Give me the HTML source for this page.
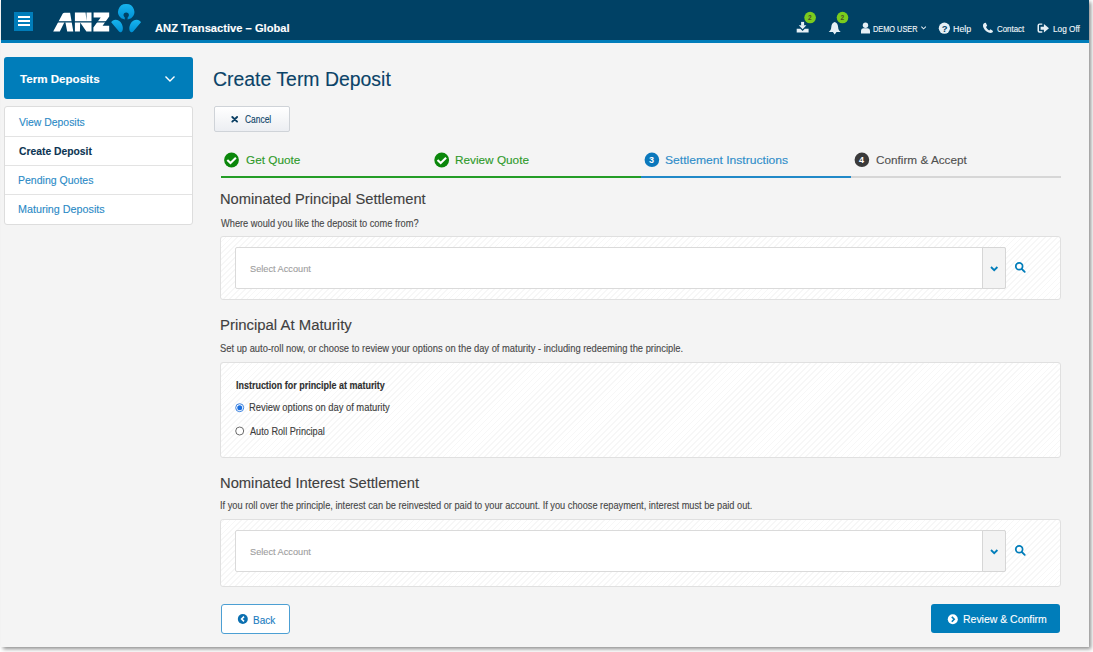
<!DOCTYPE html>
<html><head><meta charset="utf-8">
<style>
html,body{margin:0;padding:0;}
body{width:1093px;height:652px;background:#ffffff;position:relative;overflow:hidden;font-family:"Liberation Sans", sans-serif;}
.page{position:absolute;left:1px;top:0;width:1088px;height:647px;background:#f4f4f4;box-shadow:2px 2px 4px rgba(0,0,0,0.45);}
.hdr{position:absolute;left:1px;top:0;width:1088px;height:40px;background:#004165;}
.hdrline{position:absolute;left:1px;top:40px;width:1088px;height:3px;background:#007dba;}
.t{position:absolute;white-space:nowrap;line-height:1;font-family:"Liberation Sans", sans-serif;-webkit-text-stroke:0.12px currentColor;}
.abs{position:absolute;}
.panel{position:absolute;left:220px;width:839px;border:1px solid #e0e0e0;border-radius:3px;background:repeating-linear-gradient(-45deg, #ffffff 0px, #ffffff 3px, #f7f7f7 3px, #f7f7f7 4.2px);}
.inp{position:absolute;left:235px;width:769px;height:40px;border:1px solid #dadada;border-radius:2px;background:#fff;}
.addon{position:absolute;left:982px;width:22px;height:40px;border:1px solid #d6d6d6;border-radius:0 2px 2px 0;background:#f3f3f3;}
</style></head><body>
<div class="page"></div>
<div class="hdr"></div>
<div class="hdrline"></div>
<!-- hamburger -->
<div class="abs" style="left:14px;top:12px;width:19px;height:19px;background:#007dba;"></div>
<div class="abs" style="left:18px;top:16px;width:12px;height:2px;background:#fff;"></div>
<div class="abs" style="left:18px;top:20px;width:12px;height:2px;background:#fff;"></div>
<div class="abs" style="left:18px;top:24px;width:12px;height:2px;background:#fff;"></div>
<!-- logo -->
<svg class="abs" style="left:0;top:0" width="150" height="40" viewBox="0 0 150 40">
 <defs>
  <linearGradient id="lg" x1="0" y1="0" x2="0" y2="1"><stop offset="0" stop-color="#17b4ee"/><stop offset="1" stop-color="#0090d4"/></linearGradient>
 </defs>
 <g fill="#ffffff">
  <path d="M53.2 31.4 L62.8 13.6 Q63.4 12.7 64.6 12.7 L70.1 12.7 L73.3 31.4 L67.2 31.4 L65.4 22.2 L64.4 22.2 L59.8 31.4 Z"/>
  <path d="M74.9 12.6 L85.6 12.6 L86.5 20.7 L86.5 12.6 L91.5 12.6 L91.5 31.4 L86.4 31.4 L80.2 22.5 L79.9 31.4 L74.9 31.4 Z"/>
  <path d="M93.6 12.6 L109.2 12.6 L109.2 16.5 L102.6 25.8 L109.2 25.8 L109.2 31.4 L93.4 31.4 L93.4 27.5 L100.7 17.5 L93.6 17.5 Z"/>
 </g>
 <rect x="50" y="21.2" width="62" height="1.3" fill="#004165"/>
 <path fill="url(#lg)" fill-rule="evenodd" d="M126.2 4 A7.9 7.9 0 0 1 131.2 18.2 L127.6 19.6 L127.6 17.4 A2.7 2.7 0 1 0 124.8 17.4 L124.8 19.6 L121.2 18.2 A7.9 7.9 0 0 1 126.2 4 Z"/>
 <path fill="url(#lg)" d="M111.2 22.2 C113 18.6 119.2 18.8 121.8 24 C123.6 27.8 123 31.6 121 32.2 C120.2 32.5 119.6 32.1 119 31.5 Z"/>
 <path fill="url(#lg)" d="M141 22.2 C139.2 18.6 133 18.8 130.4 24 C128.6 27.8 129.2 31.6 131.2 32.2 C132 32.5 132.6 32.1 133.2 31.5 Z"/>
</svg>
<!-- header icons -->
<svg class="abs" style="left:780px;top:0" width="310" height="40" viewBox="780 0 310 40">
 <g fill="#e6f0f6">
  <!-- download -->
  <rect x="801.1" y="21.9" width="3" height="3.8"/>
  <path d="M798.8 25.3 L806.4 25.3 L802.6 29.2 Z"/>
  <path d="M796.7 28.8 L800.4 28.8 L802.6 31 L804.8 28.8 L808.6 28.8 L808.6 32.6 L796.7 32.6 Z"/>
  <!-- bell -->
  <path d="M834.7 22 C836.9 22.6 837.9 24.6 838.1 27 C838.3 29.5 839 30.8 840.7 32 L828.7 32 C830.4 30.8 831.1 29.5 831.3 27 C831.5 24.6 832.5 22.6 834.7 22 Z"/>
  <path d="M832.9 32 L836.5 32 L834.7 34.6 Z"/>
  <!-- user -->
  <circle cx="865.5" cy="25.3" r="2.7"/>
  <path d="M861 33.5 L861 31 C861 29 862.5 28.3 863.5 28.3 L867.5 28.3 C868.5 28.3 870 29 870 31 L870 33.5 Z"/>
  <!-- help circle -->
  <circle cx="944.4" cy="28.2" r="5.6"/>
  <!-- phone -->
  <path d="M984.5 23 C983 23.6 982.5 25.5 983.5 27.8 C985 31 988 33 990.5 33 C992 33 993 32 993 31 L990.5 29.2 L989.2 30.4 C987.8 29.8 986.6 28.4 986 27 L987.2 25.8 L985.8 22.8 Z"/>
  <!-- logoff -->
  <path d="M1042.3 23.4 L1039.5 23.4 Q1037.5 23.4 1037.5 25.4 L1037.5 30.7 Q1037.5 32.7 1039.5 32.7 L1042.3 32.7 L1042.3 31.3 L1039.7 31.3 Q1039 31.3 1039 30.6 L1039 25.5 Q1039 24.8 1039.7 24.8 L1042.3 24.8 Z"/>
  <path d="M1040.6 26.7 L1043.9 26.7 L1043.9 23.9 L1049 28.2 L1043.9 32.5 L1043.9 29.7 L1040.6 29.7 Z"/>
  <!-- chevron -->
  <path d="M921 27 L921.7 26.3 L923.6 28.2 L925.5 26.3 L926.2 27 L923.6 29.6 Z"/>
 </g>
 <text x="941.7" y="31.9" font-family="Liberation Sans" font-weight="700" font-size="9.5" fill="#004165">?</text>
 <circle cx="810.1" cy="17.55" r="5.8" fill="#7bcb1e"/>
 <circle cx="842.5" cy="17.55" r="5.8" fill="#7bcb1e"/>
 <text x="808.1" y="19.7" font-family="Liberation Sans" font-weight="700" font-size="6.5" fill="#4a4d28">2</text>
 <text x="840.6" y="19.7" font-family="Liberation Sans" font-weight="700" font-size="6.5" fill="#4a4d28">2</text>
</svg>
<!-- sidebar -->
<div class="abs" style="left:4px;top:57px;width:189px;height:42px;background:#007dba;border-radius:3px;"></div>
<svg class="abs" style="left:160px;top:70px" width="20" height="16" viewBox="160 70 20 16"><path d="M165.5 76.5 L170 81 L174.5 76.5" stroke="#fff" stroke-width="1.4" fill="none"/></svg>
<div class="abs" style="left:4px;top:106px;width:187px;height:117px;background:#fff;border:1px solid #dddddd;border-radius:3px;"></div>
<div class="abs" style="left:5px;top:136px;width:187px;height:1px;background:#e3e3e3;"></div>
<div class="abs" style="left:5px;top:165px;width:187px;height:1px;background:#e3e3e3;"></div>
<div class="abs" style="left:5px;top:194px;width:187px;height:1px;background:#e3e3e3;"></div>
<!-- cancel button -->
<div class="abs" style="left:214px;top:106px;width:74px;height:24px;border:1px solid #cfd3d8;border-radius:2px;background:linear-gradient(#ffffff,#eceef2);"></div>
<svg class="abs" style="left:228px;top:113px" width="14" height="12" viewBox="228 113 14 12"><path d="M232.3 117 L237.1 121.6 M237.1 117 L232.3 121.6" stroke="#0b3f63" stroke-width="1.9" stroke-linecap="round"/></svg>
<!-- steps -->
<div class="abs" style="left:221px;top:176px;width:420px;height:2px;background:#249d26;"></div>
<div class="abs" style="left:641px;top:176px;width:210px;height:2px;background:#2189c8;"></div>
<div class="abs" style="left:851px;top:176px;width:210px;height:2px;background:#d6d6d6;"></div>
<svg class="abs" style="left:0;top:140px" width="1093" height="40" viewBox="0 140 1093 40">
 <circle cx="231.5" cy="160" r="7.4" fill="#0b870b"/>
 <path d="M227.3 159.9 L230.5 163 L235.9 157.8" stroke="#fff" stroke-width="2.1" fill="none"/>
 <circle cx="441.7" cy="160" r="7.4" fill="#0b870b"/>
 <path d="M437.5 159.9 L440.7 163 L446.1 157.8" stroke="#fff" stroke-width="2.1" fill="none"/>
 <circle cx="651.9" cy="159.8" r="7.3" fill="#0b78bc"/>
 <text x="648.9" y="163.1" font-family="Liberation Sans" font-weight="700" font-size="9" fill="#fff">3</text>
 <circle cx="861.9" cy="159.8" r="7.3" fill="#3a3a3a"/>
 <text x="858.9" y="163.1" font-family="Liberation Sans" font-weight="700" font-size="9" fill="#fff">4</text>
</svg>
<!-- panel 1 -->
<div class="panel" style="top:236px;height:62px;"></div>
<div class="inp" style="top:247px;"></div>
<div class="addon" style="top:247px;"></div>
<!-- panel 2 -->
<div class="panel" style="top:362px;height:94px;"></div>
<!-- panel 3 -->
<div class="panel" style="top:519px;height:66px;"></div>
<div class="inp" style="top:530px;"></div>
<div class="addon" style="top:530px;"></div>
<svg class="abs" style="left:0;top:240px" width="1093" height="350" viewBox="0 240 1093 350">
 <path d="M991 267 L994.2 270.2 L997.4 267" stroke="#007dba" stroke-width="1.8" fill="none"/>
 <circle cx="1019.2" cy="266.3" r="3.4" stroke="#007dba" stroke-width="1.7" fill="none"/>
 <path d="M1021.7 268.8 L1024.7 271.8" stroke="#007dba" stroke-width="1.9" stroke-linecap="round"/>
 <path d="M991 550 L994.2 553.2 L997.4 550" stroke="#007dba" stroke-width="1.8" fill="none"/>
 <circle cx="1019.2" cy="549.3" r="3.4" stroke="#007dba" stroke-width="1.7" fill="none"/>
 <path d="M1021.7 551.8 L1024.7 554.8" stroke="#007dba" stroke-width="1.9" stroke-linecap="round"/>
 <!-- radios -->
 <circle cx="239.7" cy="407.7" r="4" fill="#fff" stroke="#3b82e0" stroke-width="1"/>
 <circle cx="239.7" cy="407.7" r="2.5" fill="#1a6fe0"/>
 <circle cx="239.7" cy="431" r="4" fill="#fff" stroke="#6d6d6d" stroke-width="1"/>
</svg>
<!-- back button -->
<div class="abs" style="left:221px;top:604px;width:67px;height:28px;border:1px solid #4c9fd3;border-radius:3px;background:#fff;"></div>
<svg class="abs" style="left:230px;top:610px" width="24" height="20" viewBox="230 610 24 20"><circle cx="242.8" cy="619" r="5" fill="#0b6fb0"/><path d="M244 616.6 L241.6 619 L244 621.4" stroke="#fff" stroke-width="1.6" fill="none"/></svg>
<!-- review confirm -->
<div class="abs" style="left:931px;top:604px;width:129px;height:29px;background:#007dba;border-radius:3px;"></div>
<svg class="abs" style="left:940px;top:610px" width="24" height="20" viewBox="940 610 24 20"><circle cx="952.8" cy="619.3" r="5" fill="#fff"/><path d="M951.8 616.9 L954.2 619.3 L951.8 621.7" stroke="#007dba" stroke-width="1.6" fill="none"/></svg>
<div class="t" id="anzt" style="left:155.20px;top:23.02px;font-size:11.5px;font-weight:700;color:#ffffff;transform:scaleX(0.9710);transform-origin:0 0">ANZ Transactive – Global</div>
<div class="t" id="demo" style="left:873.14px;top:24.98px;font-size:8.5px;font-weight:400;color:#f2f7fa;transform:scaleX(0.8640);transform-origin:0 0">DEMO USER</div>
<div class="t" id="help" style="left:952.71px;top:24.98px;font-size:8.5px;font-weight:400;color:#f2f7fa;transform:scaleX(1.0406);transform-origin:0 0">Help</div>
<div class="t" id="contact" style="left:996.80px;top:24.98px;font-size:8.5px;font-weight:400;color:#f2f7fa;transform:scaleX(0.9267);transform-origin:0 0">Contact</div>
<div class="t" id="logoff" style="left:1053.13px;top:24.98px;font-size:8.5px;font-weight:400;color:#f2f7fa;transform:scaleX(0.9704);transform-origin:0 0">Log Off</div>
<div class="t" id="termdep" style="left:19.60px;top:73.82px;font-size:11.5px;font-weight:700;color:#ffffff;transform:scaleX(1.0076);transform-origin:0 0">Term Deposits</div>
<div class="t" id="viewdep" style="left:18.60px;top:116.95px;font-size:11px;font-weight:400;color:#2b8ac6;transform:scaleX(0.9464);transform-origin:0 0">View Deposits</div>
<div class="t" id="createdep" style="left:18.70px;top:146.05px;font-size:11px;font-weight:700;color:#0c3553;transform:scaleX(0.9385);transform-origin:0 0">Create Deposit</div>
<div class="t" id="pending" style="left:17.74px;top:174.65px;font-size:11px;font-weight:400;color:#2b8ac6;transform:scaleX(0.9564);transform-origin:0 0">Pending Quotes</div>
<div class="t" id="maturing" style="left:17.72px;top:203.95px;font-size:11px;font-weight:400;color:#2b8ac6;transform:scaleX(0.9773);transform-origin:0 0">Maturing Deposits</div>
<div class="t" id="title" style="left:212.93px;top:69.30px;font-size:20px;font-weight:400;color:#0b4368;transform:scaleX(0.9714);transform-origin:0 0">Create Term Deposit</div>
<div class="t" id="cancel" style="left:244.90px;top:115.00px;font-size:10px;font-weight:400;color:#0b4368;transform:scaleX(0.8419);transform-origin:0 0">Cancel</div>
<div class="t" id="s1" style="left:245.70px;top:154.70px;font-size:11.3px;font-weight:400;color:#2e9a2a;transform:scaleX(1.0442);transform-origin:0 0">Get Quote</div>
<div class="t" id="s2" style="left:455.16px;top:154.70px;font-size:11.3px;font-weight:400;color:#2e9a2a;transform:scaleX(1.0429);transform-origin:0 0">Review Quote</div>
<div class="t" id="s3" style="left:665.43px;top:154.70px;font-size:11.3px;font-weight:400;color:#2f8dc9;transform:scaleX(1.0711);transform-origin:0 0">Settlement Instructions</div>
<div class="t" id="s4" style="left:875.80px;top:154.70px;font-size:11.3px;font-weight:400;color:#505050;transform:scaleX(1.0409);transform-origin:0 0">Confirm &amp; Accept</div>
<div class="t" id="h1" style="left:220.35px;top:191.12px;font-size:15.5px;font-weight:400;color:#404040;transform:scaleX(0.9472);transform-origin:0 0">Nominated Principal Settlement</div>
<div class="t" id="p1" style="left:221.00px;top:219.13px;font-size:10.2px;font-weight:400;color:#484848;transform:scaleX(0.9088);transform-origin:0 0">Where would you like the deposit to come from?</div>
<div class="t" id="sel1" style="left:249.82px;top:264.01px;font-size:9.4px;font-weight:400;color:#9e9e9e;transform:scaleX(0.9803);transform-origin:0 0">Select Account</div>
<div class="t" id="h2" style="left:220.04px;top:317.22px;font-size:15.5px;font-weight:400;color:#404040;transform:scaleX(0.9618);transform-origin:0 0">Principal At Maturity</div>
<div class="t" id="p2" style="left:220.08px;top:344.13px;font-size:10.2px;font-weight:400;color:#484848;transform:scaleX(0.9189);transform-origin:0 0">Set up auto-roll now, or choose to review your options on the day of maturity - including redeeming the principle.</div>
<div class="t" id="instr" style="left:235.70px;top:381.20px;font-size:10px;font-weight:700;color:#2e2e2e;transform:scaleX(0.8958);transform-origin:0 0">Instruction for principle at maturity</div>
<div class="t" id="r1" style="left:249.06px;top:403.40px;font-size:10px;font-weight:400;color:#3c3c3c;transform:scaleX(0.9376);transform-origin:0 0">Review options on day of maturity</div>
<div class="t" id="r2" style="left:250.00px;top:427.10px;font-size:10px;font-weight:400;color:#3c3c3c;transform:scaleX(0.9160);transform-origin:0 0">Auto Roll Principal</div>
<div class="t" id="h3" style="left:220.35px;top:475.02px;font-size:15.5px;font-weight:400;color:#404040;transform:scaleX(0.9510);transform-origin:0 0">Nominated Interest Settlement</div>
<div class="t" id="p3" style="left:220.09px;top:500.93px;font-size:10.2px;font-weight:400;color:#484848;transform:scaleX(0.9058);transform-origin:0 0">If you roll over the principle, interest can be reinvested or paid to your account. If you choose repayment, interest must be paid out.</div>
<div class="t" id="sel2" style="left:249.82px;top:547.11px;font-size:9.4px;font-weight:400;color:#9e9e9e;transform:scaleX(0.9803);transform-origin:0 0">Select Account</div>
<div class="t" id="back" style="left:252.83px;top:615.54px;font-size:10.3px;font-weight:400;color:#1b7dbf;transform:scaleX(0.9727);transform-origin:0 0">Back</div>
<div class="t" id="rc" style="left:962.55px;top:614.45px;font-size:11px;font-weight:400;color:#ffffff;transform:scaleX(0.9517);transform-origin:0 0">Review &amp; Confirm</div>
</body></html>
